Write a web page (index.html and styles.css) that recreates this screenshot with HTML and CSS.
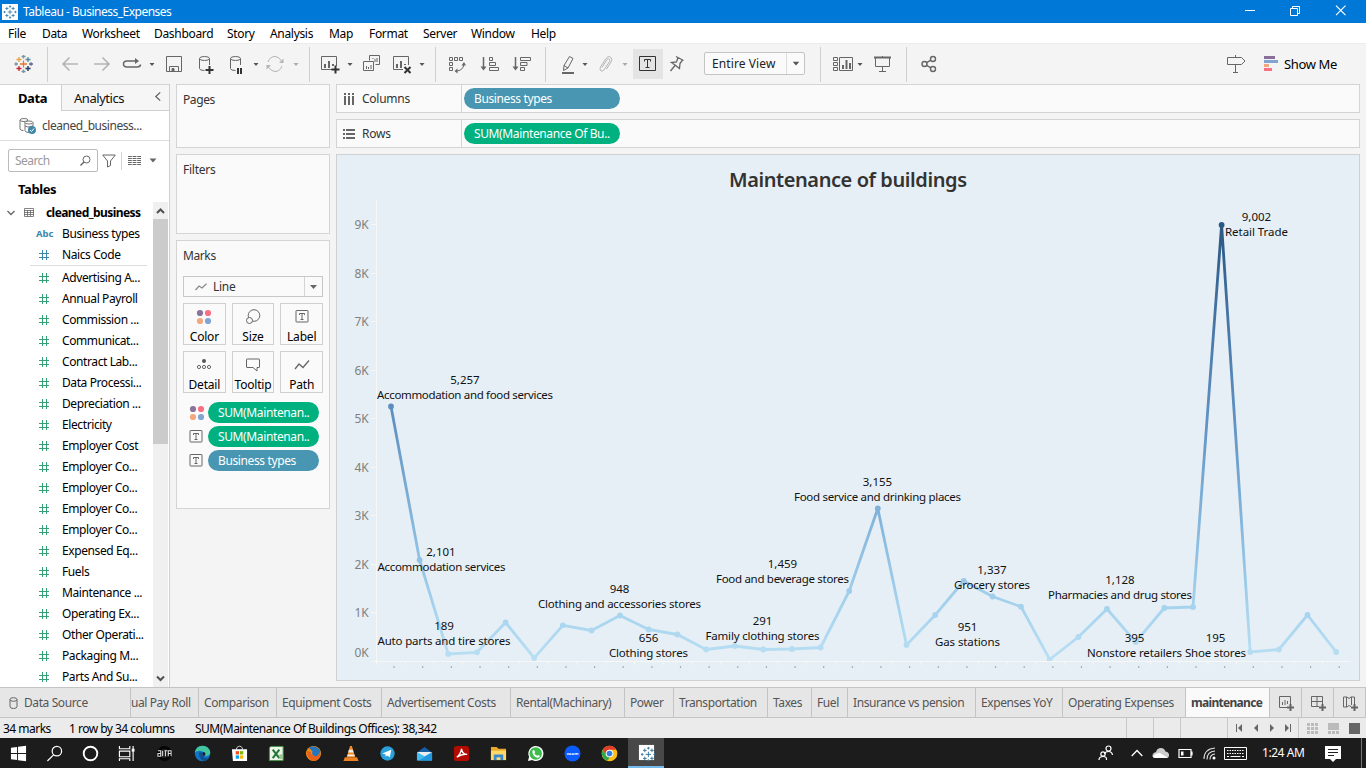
FILE: index.html
```html
<!DOCTYPE html>
<html lang="en">
<head>
<meta charset="utf-8">
<title>Tableau - Business_Expenses</title>
<link rel="stylesheet" href="styles.css">
</head>
<body>
<svg class="defs" width="0" height="0">
  <symbol id="hash" viewBox="0 0 10 10"><path d="M3.5 0v10M7.500 0v10M0 3.500h10M0 7.500h10" fill="none" stroke="currentColor" stroke-width="1"/></symbol>
  <symbol id="caret" viewBox="0 0 8 24"><path d="M1.500 11h5l-2.500 3z" fill="currentColor"/></symbol>
  <symbol id="tbox" viewBox="0 0 14 13"><path d="M1.500 .5h11q.5 0 .5.5v10.500q0 .5-.5.5h-11q-.5 0-.5-.5V1q0-.5.500-.5zM4.500 5V3.500h5V5M7 3.500v6M5.500 9.500h3" fill="none" stroke="#666"/></symbol>
  <symbol id="dots" viewBox="0 0 16 16"><circle cx="4" cy="4" r="3.100" fill="#8b739c"/><circle cx="12" cy="4" r="3.100" fill="#f87183"/><circle cx="4" cy="12" r="3.100" fill="#f4a77c"/><circle cx="12" cy="12" r="3.100" fill="#7fa5d0"/></symbol>
  <symbol id="tableau" viewBox="0 0 18 18"><path d="M9 6v6M6 9h6M5 2.500v4M3 4.500h4M13 2.500v4M11 4.500h4M5 11.500v4M3 13.500h4M13 11.500v4M11 13.500h4M9 .5v3M7.500 2h3M9 14.500v3M7.500 16h3M2 7.500v3M.5 9h3M16 7.500v3M14.500 9h3" fill="none" stroke="currentColor" stroke-width="1.100"/></symbol>
</svg>

<header class="titlebar">
  <span class="app-icon"><svg width="14" height="14"><use href="#tableau"/></svg></span>
  <span class="app-title">Tableau - Business_Expenses</span>
  <svg class="window-controls" width="106" height="12" viewBox="0 0 106 12" fill="none" stroke="#fff"><path d="M0 5.500h10M45.500 3.500h7v7h-7zM47.500 3.500v-2h7v7h-2"/><path d="M91 .7l9.500 9.500M100.500 .7L91 10.200" stroke-width="1.200"/></svg>
</header>

<nav class="menubar">
  <span>File</span><span>Data</span><span>Worksheet</span><span>Dashboard</span><span>Story</span><span>Analysis</span><span>Map</span><span>Format</span><span>Server</span><span>Window</span><span>Help</span>
</nav>

<section class="toolbar">
  <svg class="tool" viewBox="0 0 24 24" fill="none" stroke-width="1.300"><path d="M12.500 8.500v7M9 12h7" stroke="#e8762c"/><path d="M8 5v5M5.500 7.500h5M17 14v5M14.500 16.500h5" stroke="#e8a044"/><path d="M17 5v5M14.500 7.500h5" stroke="#59879b"/><path d="M8 14v5M5.500 16.500h5" stroke="#c72035"/><path d="M17 14v5M14.500 16.500h5" stroke="#1f447e"/><path d="M12.500 3v3.500M10.500 4.500h4M12.500 17.500v3.500M10.500 19.500h4M5 10.200v3.600M3.500 12H7" stroke="#7199a6"/><path d="M20 10.200v3.600M18 12h4" stroke="#5c6692"/></svg>
  <i class="sep"></i>
  <svg class="tool faint" viewBox="0 0 24 24"><path d="M20 12H5M11.500 5.500L5 12l6.500 6.500" stroke-width="1.600"/></svg>
  <svg class="tool faint" viewBox="0 0 24 24"><path d="M4 12h15M12.500 5.500L19 12l-6.500 6.500" stroke-width="1.600"/></svg>
  <svg class="tool" viewBox="0 0 24 24"><path d="M16 9H7q-3.500 0-3.500 3T7 15h10q3.500 0 3.500-2.500" stroke-width="1.500"/><path d="M15 6l4 3-4 3z" fill="#666" stroke="none"/></svg>
  <svg class="arrow"><use href="#caret"/></svg>
  <svg class="tool" viewBox="0 0 24 24"><path d="M4.500 4.500h15v15h-15zM7.500 19v-4.500h9V19" /><path d="M10 16.500h2V19h-2z" fill="#666"/></svg>
  <svg class="tool" viewBox="0 0 24 24"><ellipse cx="11.500" cy="6.500" rx="5" ry="2"/><path d="M6.500 6.500v10q0 2 5 2M16.500 6.500V13"/><path d="M16.500 14v8M12.500 18h8" stroke="#333" stroke-width="2"/></svg>
  <svg class="tool" viewBox="0 0 24 24"><ellipse cx="11.500" cy="6.500" rx="5" ry="2"/><path d="M6.500 6.500v10q0 2 5 2M16.500 6.500V13"/><path d="M14 16v6M17 16v6" stroke="#333" stroke-width="2"/></svg>
  <svg class="arrow"><use href="#caret"/></svg>
  <svg class="tool faint" viewBox="0 0 24 24"><path d="M5 10q2-5.500 7-5.500 4 0 6.500 4.500M19 14q-2 5.500-7 5.500-4 0-6.500-4.500"/><path d="M20.500 6.500v4.500H16zM3.500 17.500V13H8z" fill="#b4b4b4" stroke="none"/></svg>
  <svg class="arrow faint"><use href="#caret"/></svg>
  <i class="sep"></i>
  <svg class="tool" viewBox="0 0 24 24"><path d="M15 17.500H3.500v-13h15V14"/><path d="M7 16v-4M11 16V9M15 14v-2" stroke-width="2"/><path d="M17.500 13.500v8M13.500 17.500h8" stroke="#333" stroke-width="2"/></svg>
  <svg class="arrow"><use href="#caret"/></svg>
  <svg class="tool" viewBox="0 0 24 24"><path d="M10.500 8.500v-5h10v9h-4M4.500 9.500h10v9h-10zM7.500 17v-3M9.500 17v-2M12 17v-4M14 7V6M16 10V7M18 10V6"/></svg>
  <svg class="tool" viewBox="0 0 24 24"><path d="M13 17.500H3.500v-13h15V13"/><path d="M7 16v-4M11 16V9M15 13v-1" stroke-width="2"/><path d="M14.500 15l6 6M20.500 15l-6 6" stroke="#333" stroke-width="2"/></svg>
  <svg class="arrow"><use href="#caret"/></svg>
  <i class="sep"></i>
  <svg class="tool" viewBox="0 0 24 24"><path d="M4.500 5.500h3v3h-3zM9.500 5.500h3v3h-3zM14.500 5.500h3v3h-3zM4.500 10.500h3v3h-3zM4.500 15.500h3v3h-3zM19 12q-1 7-8 7"/><path d="M16.500 13.500L19 10l2 3.500zM12.500 16.500L9.500 19l3 2.500z" fill="#666" stroke="none"/></svg>
  <svg class="tool" viewBox="0 0 24 24"><path d="M5.500 5v12" stroke-width="1.500"/><path d="M2.500 14.500h6l-3 4z" fill="#666" stroke="none"/><path d="M11.500 5.500h3v3h-3zM11.500 10.500h6v3h-6zM11.500 15.500h9v3h-9z"/></svg>
  <svg class="tool" viewBox="0 0 24 24"><path d="M5.500 5v12" stroke-width="1.500"/><path d="M2.500 14.500h6l-3 4z" fill="#666" stroke="none"/><path d="M10.500 5.500h10v3h-10zM10.500 10.500h6.500v3h-6.500zM10.500 15.500h4v3h-4z"/></svg>
  <i class="sep"></i>
  <svg class="tool" viewBox="0 0 24 24"><path d="M13.500 4.500l3.500 2-5 9.500-4.500 2.500.5-5zM8 13.500l4 2.500"/><path d="M6 21h12" stroke-width="2"/></svg>
  <svg class="arrow"><use href="#caret"/></svg>
  <svg class="tool faint" viewBox="0 0 24 24"><path d="M9 15.500l5-8q1.500-1.500 2.500 0 .5 1 0 2l-5.500 8.500q-2 2-3.500.5-1-1.500 0-3.500l5.500-8.500q2-3 4.500-1.500 2.500 2 .5 5l-4.500 7"/></svg>
  <svg class="arrow faint"><use href="#caret"/></svg>
  <span class="tool-on"><svg width="18" height="16" viewBox="0 0 18 16" fill="none" stroke="#333"><path d="M.5 .5h16v14H.5zM5.500 5.500v-2h6v2M8.500 3.500v8M6.500 11.500h4"/></svg></span>
  <svg class="tool" viewBox="0 0 24 24"><path d="M11 4.500l7.500 4M13 5.500l-1.500 4.500-5 .5 3.500 2.500 4.500 3.500.5-5 2.500-3.500M10 13.500L5.500 19" stroke-width="1.300"/></svg>
  <div class="fit-select"><span>Entire View</span><b><svg class="arrow"><use href="#caret"/></svg></b></div>
  <i class="sep"></i>
  <svg class="tool wide" viewBox="0 0 24 24"><path d="M2.500 5.500h4v3h-4zM2.500 10.500h4v3h-4zM2.500 15.500h4v3h-4zM8.500 5.500h13v13h-13z"/><path d="M12 17v-4M15.500 17V8M19 17v-6" stroke-width="2"/></svg>
  <svg class="arrow"><use href="#caret"/></svg>
  <svg class="tool" viewBox="0 0 24 24"><path d="M4 5.500h17" stroke-width="2"/><path d="M5.500 6v8.500h14V6M12.500 4v1M12.500 14.500v5M9 19.500h7"/></svg>
  <i class="sep"></i>
  <svg class="tool" viewBox="0 0 24 24" stroke-width="1.400"><circle cx="7.500" cy="12" r="2.500"/><circle cx="16" cy="7" r="2.500"/><circle cx="16" cy="17" r="2.500"/><path d="M9.700 10.700l4.200-2.500M9.700 13.300l4.200 2.500"/></svg>
  <svg class="tool" viewBox="0 0 24 24"><path d="M3.500 5.500h14l3.500 3.500-3.500 3.500h-14zM11.500 3v2.500M11.500 12.500v8M9 20.500h5"/></svg>
  <svg class="bars" viewBox="0 0 14 24"><path d="M0 4h11v3H0z" fill="#8b6f9b"/><path d="M0 8h14v3H0z" fill="#7fa5d0"/><path d="M0 12h5v3H0z" fill="#f4a77c"/><path d="M0 16h8v3H0z" fill="#f87183"/></svg>
  <span class="showme">Show Me</span>
</section>

<main class="workspace">
  <aside class="datapane">
    <div class="pane-tabs"><b>Data</b><span>Analytics</span><svg width="8" height="10" viewBox="0 0 8 10"><path d="M6.500 .5L1.500 5l5 4.500" fill="none" stroke="#555" stroke-width="1.200"/></svg></div>
    <div class="source-row">
      <svg width="18" height="18" viewBox="0 0 18 18" fill="none" stroke="#777"><ellipse cx="5" cy="3" rx="4" ry="1.500"/><path d="M1 3v9q0 1.500 3.500 1.500"/><ellipse cx="10" cy="5.500" rx="4" ry="1.500" fill="#fff"/><path d="M6 5.500v8q0 2 4 2M14 5.500V9M6 9q2 2 8 0"/><circle cx="13" cy="13" r="4" fill="#3e88a8" stroke="none"/><path d="M11 13l1.500 1.500 2.500-3" stroke="#fff"/></svg>
      <span>cleaned_business...</span>
    </div>
    <div class="search-row">
      <div class="search"><span>Search</span><svg width="11" height="11" viewBox="0 0 11 11" fill="none" stroke="#666"><circle cx="6.500" cy="4.500" r="3.500"/><path d="M4 7L.5 10.500" stroke-width="1.400"/></svg></div>
      <svg class="funnel" width="14" height="14" viewBox="0 0 14 14"><path d="M.7 1h12.600L8.500 7v4.500L5.500 13V7z" fill="none" stroke="#666"/></svg>
      <i></i>
      <svg width="13" height="11" viewBox="0 0 13 11" stroke="#666"><path d="M0 1.500h13M0 3.500h13M0 5.500h13M0 7.500h13M0 9.500h13" stroke-dasharray="3.800 .8"/></svg>
      <svg class="list-caret" width="8" height="5" viewBox="0 0 8 5"><path d="M.5 .5h7L4 4.500z" fill="#666"/></svg>
    </div>
    <h2>Tables</h2>
    <div class="fields-wrap">
      <div class="fields">
        <div class="table-row"><svg width="8" height="6" viewBox="0 0 8 6"><path d="M.5 1L4 4.500 7.500 1" fill="none" stroke="#666" stroke-width="1.300"/></svg><svg width="10" height="9" viewBox="0 0 10 9"><path d="M.5 .5h9v8h-9zM0 2.500h10M0 4.500h10M0 6.500h10M3.500 2v7M6.500 2v7" fill="none" stroke="#666" stroke-width=".8"/></svg><b>cleaned_business</b></div>
        <div class="field dim"><em>Abc</em><span>Business types</span></div>
        <div class="field dim"><svg><use href="#hash"/></svg><span>Naics Code</span></div>
        <hr>
        <div class="field"><svg><use href="#hash"/></svg><span>Advertising A...</span></div>
        <div class="field"><svg><use href="#hash"/></svg><span>Annual Payroll</span></div>
        <div class="field"><svg><use href="#hash"/></svg><span>Commission ...</span></div>
        <div class="field"><svg><use href="#hash"/></svg><span>Communicat...</span></div>
        <div class="field"><svg><use href="#hash"/></svg><span>Contract Lab...</span></div>
        <div class="field"><svg><use href="#hash"/></svg><span>Data Processi...</span></div>
        <div class="field"><svg><use href="#hash"/></svg><span>Depreciation ...</span></div>
        <div class="field"><svg><use href="#hash"/></svg><span>Electricity</span></div>
        <div class="field"><svg><use href="#hash"/></svg><span>Employer Cost</span></div>
        <div class="field"><svg><use href="#hash"/></svg><span>Employer Co...</span></div>
        <div class="field"><svg><use href="#hash"/></svg><span>Employer Co...</span></div>
        <div class="field"><svg><use href="#hash"/></svg><span>Employer Co...</span></div>
        <div class="field"><svg><use href="#hash"/></svg><span>Employer Co...</span></div>
        <div class="field"><svg><use href="#hash"/></svg><span>Expensed Eq...</span></div>
        <div class="field"><svg><use href="#hash"/></svg><span>Fuels</span></div>
        <div class="field"><svg><use href="#hash"/></svg><span>Maintenance ...</span></div>
        <div class="field"><svg><use href="#hash"/></svg><span>Operating Ex...</span></div>
        <div class="field"><svg><use href="#hash"/></svg><span>Other Operati...</span></div>
        <div class="field"><svg><use href="#hash"/></svg><span>Packaging M...</span></div>
        <div class="field"><svg><use href="#hash"/></svg><span>Parts And Su...</span></div>
      </div>
      <div class="scrollbar">
        <svg width="15" height="17" viewBox="0 0 15 17"><path d="M4 11l3.500-3.500L11 11" fill="none" stroke="#505050" stroke-width="2"/></svg>
        <i></i>
        <svg width="15" height="17" viewBox="0 0 15 17"><path d="M4 6.500L7.500 10 11 6.500" fill="none" stroke="#505050" stroke-width="2"/></svg>
      </div>
    </div>
  </aside>

  <section class="cards">
    <div class="card pages">Pages</div>
    <div class="card filters">Filters</div>
    <div class="card marks">
      <span>Marks</span>
      <div class="mark-select"><svg width="12" height="8" viewBox="0 0 12 8"><path d="M.5 7l3.500-4 3 2L11.500 .8" fill="none" stroke="#888" stroke-width="1.200"/></svg><span>Line</span><b><svg width="7" height="4" viewBox="0 0 7 4"><path d="M0 0h7L3.500 4z" fill="#666"/></svg></b></div>
      <div class="mark-grid">
        <div><svg width="16" height="16"><use href="#dots"/></svg><span>Color</span></div>
        <div><svg width="16" height="16" viewBox="0 0 16 16" fill="#fafafa" stroke="#666"><circle cx="9" cy="6.500" r="5.800"/><circle cx="4.500" cy="11.500" r="3"/></svg><span>Size</span></div>
        <div><svg width="14" height="14" viewBox="0 -1 14 14"><use href="#tbox" width="14" height="13"/></svg><span>Label</span></div>
        <div><svg width="16" height="14" viewBox="0 0 16 14" fill="none" stroke="#666"><circle cx="8" cy="4" r="2" fill="#555" stroke="none"/><circle cx="3" cy="10" r="1.600"/><circle cx="8" cy="10" r="1.600"/><circle cx="13" cy="10" r="1.600"/></svg><span>Detail</span></div>
        <div><svg width="16" height="15" viewBox="0 -1 16 15"><path d="M2 1h12q.5 0 .5.500V9q0 .5-.5.500h-2v3.500l-4-3.500H2q-.5 0-.5-.5V1.500Q1.500 1 2 1z" fill="none" stroke="#666"/></svg><span>Tooltip</span></div>
        <div><svg width="16" height="14" viewBox="0 -2 16 14"><path d="M1 10l4-5 4 3.500L15 1.500" fill="none" stroke="#666" stroke-width="1.300"/></svg><span>Path</span></div>
      </div>
      <div class="mark-pill"><svg width="16" height="16"><use href="#dots"/></svg><span class="pill green">SUM(Maintenan..</span></div>
      <div class="mark-pill"><svg width="14" height="13"><use href="#tbox"/></svg><span class="pill green">SUM(Maintenan..</span></div>
      <div class="mark-pill"><svg width="14" height="13"><use href="#tbox"/></svg><span class="pill blue">Business types</span></div>
    </div>
  </section>

  <section class="view">
    <div class="shelf"><label><svg width="12" height="12" viewBox="0 0 12 12"><path d="M2 0v2M2 3v9M6 0v2M6 3v9M10 0v2M10 3v9" stroke="#666" stroke-width="2"/></svg>Columns</label><span class="pill blue">Business types</span></div>
    <div class="shelf"><label><svg width="12" height="12" viewBox="0 0 12 12"><path d="M0 2h2M3 2h9M0 6h2M3 6h9M0 10h2M3 10h9" stroke="#666" stroke-width="2"/></svg>Rows</label><span class="pill green">SUM(Maintenance Of Bu..</span></div>
    <figure class="chart">
      <svg width="1022" height="525" viewBox="337 155 1022 525">
        <defs>
          <linearGradient id="scale" gradientUnits="userSpaceOnUse" x1="0" y1="661" x2="0" y2="225">
            <stop offset="0" stop-color="#b9dff3"/><stop offset=".12" stop-color="#a6d3ee"/><stop offset=".35" stop-color="#7fb1d9"/><stop offset=".58" stop-color="#5c8ebf"/><stop offset=".8" stop-color="#4473a3"/><stop offset="1" stop-color="#2a5783"/>
          </linearGradient>
          <clipPath id="plot"><rect x="376" y="200" width="976" height="461"/></clipPath>
        </defs>
        <text class="chart-title" x="848" y="187" text-anchor="middle" textLength="238">Maintenance of buildings</text>
        <path class="axis" d="M376.500 200.500v461M371 224.500h5M371 273.500h5M371 321.500h5M371 370.500h5M371 418.500h5M371 467.500h5M371 515.500h5M371 564.500h5M371 612.500h5M371 661.500h979.500"/>
        <path class="ticks" d="M376 663.500h975"/>
        <g class="axis-labels"><text x="354.500" y="229">9K</text><text x="354.500" y="278">8K</text><text x="354.500" y="326">7K</text><text x="354.500" y="375">6K</text><text x="354.500" y="423">5K</text><text x="354.500" y="472">4K</text><text x="354.500" y="520">3K</text><text x="354.500" y="569">2K</text><text x="354.500" y="617">1K</text><text x="354.500" y="657">0K</text></g>
        <path class="headers" d="M393.500 667h946.500"/>
        <g clip-path="url(#plot)">
          <path class="series" d="M391 406.500L419.600 560L448.200 654L477 652.300L505.600 622.500L534.200 658L562.800 625.300L591.500 630.500L620 615.500L648.700 629.500L677.400 634.500L706 649.500L734.700 646L763.300 649.500L792 649L820.600 647.500L849.200 591L877.800 508.500L906.500 645L935.200 615L963.800 581L992.500 596.500L1021 606.700L1049.700 659.500L1078.400 637L1107 609L1135.700 642L1164.300 608L1193 607L1221.600 225L1250.200 652L1278.900 649.500L1307.500 615L1336.200 652"/>
          <path class="points" d="M391 406.500h0M419.600 560h0M448.200 654h0M477 652.300h0M505.600 622.500h0M534.200 658h0M562.800 625.300h0M591.500 630.500h0M620 615.500h0M648.700 629.500h0M677.400 634.500h0M706 649.500h0M734.700 646h0M763.300 649.500h0M792 649h0M820.600 647.500h0M849.200 591h0M877.800 508.500h0M906.500 645h0M935.200 615h0M963.800 581h0M992.500 596.500h0M1021 606.700h0M1049.700 659.500h0M1078.400 637h0M1107 609h0M1135.700 642h0M1164.300 608h0M1193 607h0M1221.600 225h0M1250.200 652h0M1278.900 649.500h0M1307.500 615h0M1336.200 652h0"/>
        </g>
        <g class="mark-labels">
          <text x="465" y="384">5,257</text><text x="465" y="399" textLength="176">Accommodation and food services</text>
          <text x="441" y="556">2,101</text><text x="441.500" y="571" textLength="128">Accommodation services</text>
          <text x="444" y="630">189</text><text x="444" y="645" textLength="133">Auto parts and tire stores</text>
          <text x="619.500" y="593">948</text><text x="619.500" y="608" textLength="163">Clothing and accessories stores</text>
          <text x="648.500" y="642">656</text><text x="648.500" y="657" textLength="79">Clothing stores</text>
          <text x="762.500" y="625">291</text><text x="762.500" y="640" textLength="114">Family clothing stores</text>
          <text x="782.500" y="568">1,459</text><text x="782.500" y="583" textLength="133">Food and beverage stores</text>
          <text x="877.500" y="486">3,155</text><text x="877.500" y="501" textLength="167">Food service and drinking places</text>
          <text x="967.500" y="631">951</text><text x="967.500" y="646" textLength="65">Gas stations</text>
          <text x="992" y="574">1,337</text><text x="992" y="589" textLength="76">Grocery stores</text>
          <text x="1120" y="584">1,128</text><text x="1120" y="599" textLength="144">Pharmacies and drug stores</text>
          <text x="1134.500" y="642">395</text><text x="1134.500" y="657" textLength="95">Nonstore retailers</text>
          <text x="1215.500" y="642">195</text><text x="1215.500" y="657" textLength="61">Shoe stores</text>
          <text x="1256.500" y="221">9,002</text><text x="1256.500" y="236" textLength="63">Retail Trade</text>
        </g>
      </svg>
    </figure>
  </section>
</main>

<nav class="sheets">
  <span class="ds"><svg width="9" height="12" viewBox="0 0 9 12" fill="none" stroke="#666"><ellipse cx="4.500" cy="2.500" rx="3.500" ry="1.800"/><path d="M1 2.500v7q0 2 3.500 2t3.500-2v-7"/></svg>Data Source</span>
  <span class="cut">ual Pay Roll</span><span>Comparison</span><span>Equipment Costs</span><span>Advertisement Costs</span><span>Rental(Machinary)</span><span>Power</span><span>Transportation</span><span>Taxes</span><span>Fuel</span><span>Insurance vs pension</span><span>Expenses YoY</span><span>Operating Expenses</span><span class="current">maintenance</span>
  <span class="add"><svg width="16" height="16" viewBox="0 0 16 16"><path d="M9 12.500H1.500V1.500h11V9M4.500 10V7M7 10V5M9.500 9V6"/><path d="M12.500 9v7M9 12.500h7" stroke-width="2"/></svg></span>
  <span class="add"><svg width="16" height="16" viewBox="0 0 16 16"><path d="M9 11.500H1.500v-10h11V9M7 1.500v10M1.500 6.500h11"/><path d="M12.500 9v7M9 12.500h7" stroke-width="2"/></svg></span>
  <span class="add"><svg width="16" height="16" viewBox="0 0 16 16"><path d="M9 11.500L7 10.500l-2 1.500H1.500V2H5l2 1.500L9 2h3.500v7M4.500 2v10M9.500 2v8"/><path d="M12.500 9v7M9 12.500h7" stroke-width="2"/></svg></span>
</nav>

<footer class="status">
  <span>34 marks</span><span>1 row by 34 columns</span><span>SUM(Maintenance Of Buildings Offices): 38,342</span>
  <i></i><i></i><i></i>
  <i class="pager"><svg width="58" height="8" viewBox="0 0 58 8" fill="#666"><path d="M1 0h1v8H1zM7 0v8L3 4zM23 0v8l-4-4zM35 0v8l4-4zM50 0v8l4-4zM55 0h1v8h-1z"/></svg></i>
  <i class="modes"><svg width="54" height="11" viewBox="0 0 54 11" fill="#bbb"><path d="M0 0h3v3H0zM4 0h3v3H4zM8 0h3v3H8zM0 4h3v3H0zM4 4h3v3H4zM8 4h3v3H8zM0 8h3v3H0zM4 8h3v3H4zM8 8h3v3H8zM21 0h11v7H21zM21 8h3v3h-3zM25 8h3v3h-3zM29 8h3v3h-3z"/><path d="M42 0h11v11H42z" fill="#666"/></svg></i>
</footer>

<footer class="taskbar">
  <span><svg viewBox="0 0 18 18" fill="#fff"><path d="M1 3l6.500-1v6.500H1zM8.500 1.900L17 .7v7.800H8.500zM1 9.500h6.500V16L1 15zM8.500 9.500H17v7.800l-8.500-1.200z"/></svg></span>
  <span><svg viewBox="0 0 18 18" fill="none" stroke="#fff" stroke-width="1.300"><circle cx="11.500" cy="6.500" r="5"/><path d="M8 10.500L1.500 17"/></svg></span>
  <span><svg viewBox="0 0 18 18"><circle cx="9" cy="9" r="7.200" fill="none" stroke="#fff" stroke-width="2"/></svg></span>
  <span><svg viewBox="0 0 18 18" fill="none" stroke="#fff" stroke-width="1.200"><path d="M1.500 1v3h11V1M1.500 6.500h11v6h-11zM1.500 17v-2.500h11V17M16 1v16"/><path d="M14.500 4h3v3h-3z" fill="#fff" stroke="none"/></svg></span>
  <span><svg viewBox="0 0 18 18" fill="none" stroke="#ddd"><circle cx="9" cy="9" r="6.500" stroke="#050505" stroke-width="3"/><path d="M2 6h3v6H2V9h3M7 12V6M9 6h3M10 6v6M13 12V6h3v6M13 9h3" stroke-width="1.100"/></svg></span>
  <span><svg viewBox="0 0 18 18"><circle cx="9" cy="9" r="8.200" fill="#0f76c7"/><path d="M1 8Q2 1 9 .8q7 .2 8.200 7 .2 4-5.200 4 1-4-3-5Q4 5 1 8z" fill="#43c6a0"/><path d="M5.500 8Q4 14 10 17q4 0 6-3.500-6 1.500-6.500-3.500Q9 7 5.500 8z" fill="#14508f"/><path d="M9 9q1-3 3 0-.5 2-1 2.500-2 0-2-2.500z" fill="#1c1c1c"/></svg></span>
  <span><svg viewBox="0 0 18 18"><path d="M6 5V3q3-3.500 6 0v2" fill="none" stroke="#ddd"/><path d="M1 4.500h16V17H2z" fill="#fff"/><path d="M5 6.500h3.500V10H5z" fill="#f25022"/><path d="M9.500 6.500H13V10H9.500z" fill="#7fba00"/><path d="M5 11h3.500v3.500H5z" fill="#00a4ef"/><path d="M9.500 11H13v3.500H9.500z" fill="#ffb900"/></svg></span>
  <span><svg viewBox="0 0 18 18"><path d="M3 1.500h13v15H1.500V3z" fill="#eaf5e8" stroke="#479244"/><path d="M5 5l7 9M12 5l-7 9" stroke="#247839" stroke-width="2.200"/><path d="M12 10h4v5h-4z" fill="#9ac58e"/></svg></span>
  <span><svg viewBox="0 0 18 18"><circle cx="9" cy="9" r="8" fill="#f08a17"/><path d="M4 3q7-4 12 3 1 5-3 7-7-2-5-6z" fill="#2376bd"/><path d="M2 5q1 3 4 2 0 5 6 5 3-1 3-5 3 7-4 10Q2 17 2 5z" fill="#e8601b"/></svg></span>
  <span><svg viewBox="0 0 18 18"><path d="M8.500 1h2L14 13H5z" fill="#f08c22"/><path d="M7.300 5h4l1 3H6.500zM6 10h7l.7 2H5.400z" fill="#eee"/><path d="M3 13h13l1.500 4h-16z" fill="#ee8120"/></svg></span>
  <span><svg viewBox="0 0 18 18"><circle cx="9" cy="9" r="7.600" fill="#2aa1da"/><path d="M3.500 9l9.500-4-1.500 8-3-2-1.500 1.500V10z" fill="#fff"/></svg></span>
  <span><svg viewBox="0 0 18 18"><path d="M1 8L9 2l8 6v8H1z" fill="#185ea4"/><path d="M1 8h16v8.500H1z" fill="#43bdf2"/><path d="M1 7.500h16L9 12z" fill="#eee"/><path d="M17 8v8.500H3z" fill="#2198e0"/></svg></span>
  <span><svg viewBox="0 0 18 18"><rect x="1" y="1" width="16" height="16" rx="3" fill="#b30b00"/><path d="M4 13q4-3 5-9 1 6 6 6-5-1-11 3z" fill="none" stroke="#fff" stroke-width="1.400"/></svg></span>
  <span><svg viewBox="0 0 18 18"><path d="M1 2h6l2 2h8v12H1z" fill="#e9a92a"/><path d="M1 6h16v10H1z" fill="#ffd968"/><path d="M4 16v-6h10v6h-3v-3H7v3z" fill="#3989d0"/></svg></span>
  <span><svg viewBox="0 0 18 18"><path d="M1 17l1.200-4.500A8 8 0 1 1 5.500 16z" fill="#fff"/><circle cx="9.200" cy="9" r="6.600" fill="#3abd4a"/><path d="M6 5.500q2-1 2.500 2L8 9q1 2 3 2.500l1-1q2 .5 1.500 2-2 2-5 0Q5 10 6 5.500z" fill="#fff"/></svg></span>
  <span><svg viewBox="0 0 18 18"><circle cx="9" cy="9" r="8.500" fill="#0b5cff"/><text x="9" y="10.700" class="zoom-word">zoom</text></svg></span>
  <span><svg viewBox="0 0 18 18"><circle cx="9" cy="9" r="8.300" fill="#fbbf16"/><path d="M2 5A8 8 0 0 1 16 5H9q-4 0-4 5z" fill="#e33b2e"/><path d="M2 5l4 7 3 1-2 3.700A8 8 0 0 1 2 5z" fill="#2da94f"/><circle cx="9" cy="9" r="4" fill="#fff"/><circle cx="9" cy="9" r="3" fill="#347de0"/></svg></span>
  <span class="running"><svg viewBox="0 0 18 18"><path d="M1 1h16v16H1z" fill="#fff"/><svg x="2.500" y="2.500" width="13" height="13" color="#3a78a0"><use href="#tableau"/></svg></svg></span>
  <div class="tray">
    <svg width="16" height="16" viewBox="0 0 16 16" fill="none" stroke="#fff" stroke-width="1.200"><circle cx="10.500" cy="3.500" r="2.500"/><path d="M6.500 9Q7 6.500 10.500 6.500T14.500 10"/><circle cx="5" cy="9" r="2.200"/><path d="M1 15q0-3.500 4-3.500T8.500 15"/></svg>
    <svg width="12" height="8" viewBox="0 0 12 8"><path d="M.7 7L6 1.500 11.300 7" fill="none" stroke="#fff" stroke-width="1.300"/></svg>
    <svg width="18" height="12" viewBox="0 0 18 12"><path d="M3 11q-3-.5-2.500-3T4 5q1-4 5-4 3.500 0 4.500 3.500Q17.500 5 17 9q-.5 2-2 2z" fill="#ccc"/><path d="M1 10q2-4 7-4l8 5H3z" fill="#fff"/></svg>
    <svg width="15" height="10" viewBox="0 0 15 10"><path d="M1 1.500h12v8H1zM14 3.500v4" fill="none" stroke="#fff" stroke-width="1.200"/><path d="M3 3.500h2.500v4H3z" fill="#fff"/></svg>
    <svg width="13" height="13" viewBox="0 0 13 13" fill="none" stroke="#ddd" stroke-width="1.100"><path d="M1 12Q1 2 12 1M4 12.500q0-8 8-8.500M7 12.500q0-5 5-5.500"/><circle cx="11" cy="11" r="1.500" fill="#fff" stroke="none"/></svg>
    <svg width="23" height="13" viewBox="0 0 23 13" fill="none" stroke="#fff"><path d="M.5 .5h22v12H.5z"/><path d="M3 3.500h17M3 6.500h17" stroke-dasharray="1.500 1"/><path d="M3 9.500h2M6.500 9.500h10M18 9.500h2"/></svg>
    <time>1:24 AM</time>
    <svg width="16" height="16" viewBox="0 0 16 16"><path d="M0 0h16v13h-5l-3 3-3-3H0z" fill="#fff"/><path d="M3 3.500h10M3 6.500h10M3 9.500h6" stroke="#222"/></svg>
    <i></i>
  </div>
</footer>
</body>
</html>
```
FILE: styles.css
```css
* { box-sizing: border-box; }
body {
  margin: 0; width: 1366px; height: 768px; overflow: hidden;
  display: flex; flex-direction: column;
  font: 12px/16px "Noto Sans", "Open Sans", sans-serif;
  color: #111; background: #f4f4f4; white-space: nowrap;
}
svg { flex: none; display: block; }
.defs { position: absolute; }
i, em { font-style: normal; flex: none; }

.titlebar { height: 23px; flex: none; display: flex; align-items: center; background: #0078d7; color: #fff; padding-left: 2px; }
.app-icon { width: 16px; height: 16px; background: #fff; color: #357faa; display: grid; place-items: center; }
.app-title { margin-left: 5px; letter-spacing: -.5px; }
.window-controls { margin: -2px 15px 0 auto; }

.menubar { height: 20px; flex: none; background: #fff; display: grid; align-items: center; padding: 2px 0 0 8px;
  grid-template-columns: 34px 40px 72px 73px 43px 59px 40px 54px 48px 60px 40px; letter-spacing: -.32px; color: #000; }

.toolbar { height: 41px; flex: none; display: grid; align-items: start; padding-left: 11px; border-top: 1px solid #ececec;
  grid-template-columns: 36px 11px 32px 30px 28px 14px 31px 31px 28px 11px 29px 17px 9px 28px 13px 31px 28px 17px 10px 33px 32px 35px 11px 25px 12px 28px 12px 32px 39px 116px 11px 25px 14px 36px 11px 307px 40px 20px auto; }
.tool, .arrow { height: 24px; margin-top: 8px; fill: none; stroke: #666; color: #555; }
.tool { width: 24px; }
.arrow { width: 8px; stroke: none; }
.tool.faint { stroke: #b4b4b4; }
.arrow.faint { color: #aaa; }
.sep { width: 1px; height: 35px; margin-top: 3px; background: #cfcfcf; }
.tool-on { width: 30px; height: 30px; margin-top: 5px; background: #e4e4e4; display: grid; place-items: center; }
.fit-select { width: 101px; height: 23px; margin-top: 8px; border: 1px solid #c4c4c4; border-radius: 2px; background: #fafafa; display: flex; align-items: center; padding-left: 7px; color: #222; letter-spacing: .1px; }
.fit-select span { width: 74px; padding-top: 1px; }
.fit-select b { border-left: 1px solid #ddd; height: 21px; width: 18px; display: flex; justify-content: center; }
.fit-select .arrow { margin-top: -2px; transform: scale(1.300); }
.bars { width: 14px; height: 24px; margin-top: 8px; }
.showme { font-size: 13px; margin-top: 12px; letter-spacing: -.35px; color: #000; }

.workspace { height: 603px; flex: none; display: grid; grid-template-columns: 170px 154px 1024px; column-gap: 6px; }

.datapane { background: #fff; border-right: 1px solid #cfcfcf; height: 603px; display: flex; flex-direction: column; overflow: hidden; }
.pane-tabs { height: 27px; flex: none; display: flex; font-size: 13px; line-height: 27px; border-top: 1px solid #d4d4d4; letter-spacing: -.45px; }
.pane-tabs b { width: 61px; padding-left: 18px; letter-spacing: -.4px; color: #000; }
.pane-tabs span { width: 93px; background: #f6f6f6; padding-left: 12px; border: solid #cfcfcf; border-width: 0 0 1px 1px; }
.pane-tabs svg { width: 15px; height: 26px; padding: 7px 7px 9px 0; background: #f6f6f6; border-bottom: 1px solid #cfcfcf; }
.source-row { height: 30px; flex: none; display: flex; align-items: center; gap: 5px; padding-left: 19px; border-bottom: 1px solid #ddd; color: #444; letter-spacing: -.45px; }
.search-row { height: 41px; flex: none; display: flex; align-items: center; padding: 0 0 2px 8px; }
.search { width: 90px; height: 23px; border: 1px solid #bbb; border-radius: 2px; display: flex; align-items: center; justify-content: space-between; padding: 0 6px; color: #999; letter-spacing: -.55px; }
.funnel { margin: 0 5px 0 4px; }
.search-row i { width: 1px; height: 18px; background: #d4d4d4; margin-right: 6px; }
.list-caret { margin-left: 8px; }
h2 { font-size: 13px; line-height: 15px; margin: 0; height: 20px; flex: none; padding-left: 18px; letter-spacing: -.4px; color: #000; }
.fields-wrap { display: flex; height: 485px; }
.fields { width: 153px; color: #000; }
.table-row { height: 21px; display: flex; align-items: center; padding-left: 7px; }
.table-row svg + svg { margin: 0 12px 0 9px; }
.table-row b { letter-spacing: -.57px; padding-top: 1px; }
.field { height: 21px; display: grid; grid-template-columns: 27px auto; justify-content: start; align-items: center; padding-left: 35px; color: #35a075; letter-spacing: -.4px; }
.field svg { width: 10px; height: 10px; margin-left: 4px; }
.field span { color: #000; padding-top: 1px; }
.field.dim { color: #3c87ae; }
.field em { font-size: 9.500px; font-weight: 700; letter-spacing: 0; padding-left: 1px; }
hr { width: 117px; height: 1px; margin: 0 0 1px 30px; border: 0; background: #ddd; }
.scrollbar { width: 15px; height: 485px; background: #f0f0f0; display: flex; flex-direction: column; }
.scrollbar i { height: 225px; background: #cbcbcb; }
.scrollbar svg:last-child { margin-top: auto; }

.cards { display: flex; flex-direction: column; gap: 6px; }
.card { background: #fafafa; border: 1px solid #d4d4d4; padding: 7px 6px; color: #333; letter-spacing: -.4px; }
.pages { height: 64px; }
.filters { height: 80px; letter-spacing: -.25px; }
.marks { height: 269px; display: flex; flex-direction: column; }
.mark-select { height: 21px; flex: none; margin-top: 12px; border: 1px solid #c8c8c8; display: flex; align-items: center; padding-left: 11px; }
.mark-select span { margin-left: 6px; letter-spacing: -.3px; padding-top: 1px; }
.mark-select b { margin-left: auto; width: 18px; height: 19px; border-left: 1px solid #d4d4d4; display: grid; place-items: center; }
.mark-grid { display: grid; grid-template-columns: repeat(3, 1fr); gap: 6px; margin: 6px 0 9px; }
.mark-grid div { height: 42px; border: 1px solid #d0d0d0; display: flex; flex-direction: column; align-items: center; justify-content: space-between; padding: 5px 0 0; color: #000; letter-spacing: -.2px; }
.mark-grid span { height: 15px; }
.mark-pill { height: 21px; margin-bottom: 3px; display: grid; grid-template-columns: 25px 111px; align-items: center; }
.mark-pill svg { margin-left: 6px; }
.pill { height: 21px; border-radius: 11px; color: #fff; line-height: 21px; padding-left: 10px; letter-spacing: -.38px; }
.green { background: #00b180; }
.blue { background: #4996b2; }

.view { display: flex; flex-direction: column; gap: 6px; }
.shelf { height: 29px; background: #fafafa; border: 1px solid #d4d4d4; display: flex; align-items: center; color: #333; }
.shelf label { width: 125px; height: 27px; border-right: 1px solid #d4d4d4; display: flex; align-items: center; gap: 7px; padding-left: 6px; letter-spacing: -.25px; }
.shelf .pill { width: 156px; margin-left: 2px; }
.chart { margin: 0; height: 527px; border: 1px solid #d0d0d0; background: #e6eff5; }
.chart-title { font-size: 20px; font-weight: 600; fill: #333; }
.axis { fill: none; stroke: #f7f7f5; }
.ticks { fill: none; stroke: #f7f7f5; stroke-width: 3; stroke-dasharray: 1 27.670; }
.headers { fill: none; stroke: #8b9aa5; stroke-width: 1.500; stroke-dasharray: 1.200 27.440; }
.axis-labels { font-size: 12px; fill: #808080; }
.series { fill: none; stroke: url(#scale); stroke-width: 2.800; stroke-linejoin: round; }
.points { fill: none; stroke: url(#scale); stroke-width: 5.800; stroke-linecap: round; }
.mark-labels { font-size: 11.500px; fill: #111; text-anchor: middle; }

.sheets { height: 31px; flex: none; display: grid; background: #e6e6e6; border: solid #c4c4c4; border-width: 1px 0; color: #555; letter-spacing: -.4px;
  grid-template-columns: 131px 68px 78px 105px 129px 114px 49px 94px 44px 36px 128px 87px 123px 84px 32px 32px 32px; }
.sheets span { display: flex; align-items: center; padding-left: 5px; border-right: 1px solid #c4c4c4; overflow: hidden; }
.sheets .ds { padding-left: 9px; gap: 6px; }
.sheets .cut { padding-left: 0; }
.sheets .current { background: #fafafa; color: #444; font-weight: 700; letter-spacing: -.7px; }
.add svg { margin-left: 3px; fill: none; stroke: #666; }

.status { height: 20px; flex: none; background: #ebebeb; display: grid; align-items: center; padding-left: 3px; color: #000; letter-spacing: -.52px;
  grid-template-columns: 66px 126px 931px 27px 27px 47px 71px auto; }
.status span { padding-top: 2px; }
.status i { height: 20px; border-left: 1px solid #c8c8c8; }
.status .pager, .status .modes { display: flex; align-items: center; padding-left: 7px; }
.status .modes { padding-left: 8px; }

.taskbar { height: 30px; flex: none; background: #1c1c1c; color: #fff; display: grid; grid-template-columns: 36px 36px 36px 36px 40px repeat(13, 37px) 1fr; }
.taskbar span { display: grid; place-items: center; }
.taskbar span svg { width: 17px; height: 17px; }
.taskbar .running { background: #484848; border-bottom: 2px solid #76b9ed; width: 36px; }
.zoom-word { font-size: 4.500px; font-weight: 700; fill: #fff; text-anchor: middle; }
.tray { display: flex; align-items: center; justify-content: flex-end; }
.tray svg { margin-right: 8px; }
.tray svg:nth-child(1) { margin-right: 17px; }
.tray svg:nth-child(2) { margin-right: 9px; }
.tray svg:nth-child(4) { margin-right: 10px; }
.tray svg:nth-child(6) { margin-right: 15px; }
.tray time { width: 43px; letter-spacing: -.45px; }
.tray svg:nth-child(8) { margin: 2px 20px 0; }
.tray i { width: 5px; height: 30px; border-left: 1px solid #777; }
```
